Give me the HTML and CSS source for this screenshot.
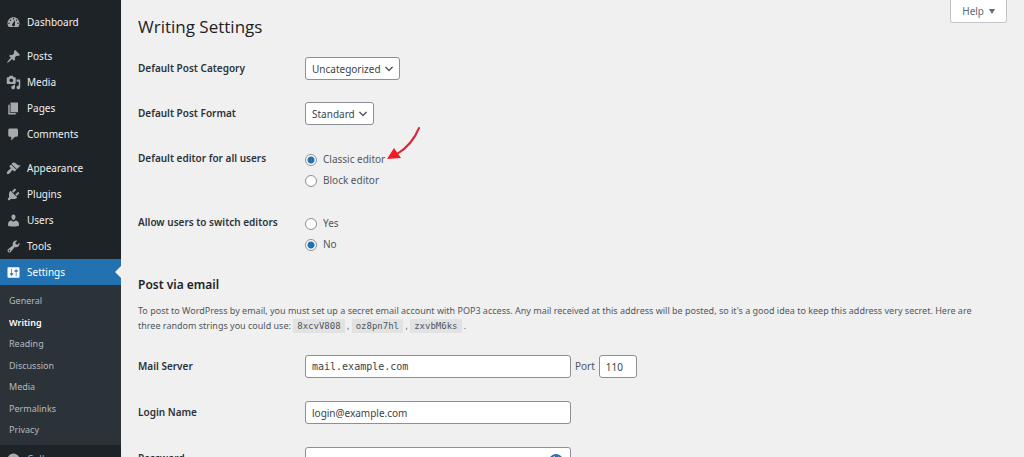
FILE: index.html
```html
<!DOCTYPE html>
<html lang="en">
<head>
  <meta charset="UTF-8" />
  <meta name="viewport" content="width=device-width, initial-scale=1.0"/>
  <title>Writing Settings</title>
  <link rel="stylesheet" href="styles.css">
</head>
<body>
  <div class="layout">
    <nav class="sidebar">
      <ul class="menu">
        <li><a href="#"><svg viewBox="0 0 20 20"><path fill-rule="evenodd" d="M3.76 16h12.48c1.1-1.37 1.76-3.11 1.76-5 0-4.42-3.58-8-8-8s-8 3.58-8 8c0 1.89.66 3.63 1.76 5zM10 4c.55 0 1 .45 1 1s-.45 1-1 1-1-.45-1-1 .45-1 1-1zM6 6c.55 0 1 .45 1 1s-.45 1-1 1-1-.45-1-1 .45-1 1-1zm8 0c.55 0 1 .45 1 1s-.45 1-1 1-1-.45-1-1 .45-1 1-1zm-5.37 5.55L12 7v6c0 1.1-.9 2-2 2s-2-.9-2-2c0-.57.24-1.08.63-1.45zM4 10c.55 0 1 .45 1 1s-.45 1-1 1-1-.45-1-1 .45-1 1-1zm12 0c.55 0 1 .45 1 1s-.45 1-1 1-1-.45-1-1 .45-1 1-1z"/></svg>Dashboard</a></li>
      </ul>
      <ul class="menu">
        <li><a href="#"><svg viewBox="0 0 20 20"><path d="M10.44 3.02l1.82-1.82 6.36 6.35-1.83 1.82c-1.05-.68-2.48-.57-3.41.36l-.75.75c-.92.93-1.04 2.35-.35 3.41l-1.83 1.82-2.41-2.41-2.8 2.79c-.42.42-3.38 2.71-3.8 2.29s1.86-3.39 2.28-3.81l2.79-2.79L4.1 9.36l1.83-1.82c1.05.69 2.48.57 3.4-.36l.75-.75c.93-.92 1.05-2.35.36-3.41z"/></svg>Posts</a></li>
        <li><a href="#"><svg viewBox="0 0 20 20"><path fill-rule="evenodd" d="M13 11V4c0-.55-.45-1-1-1h-1.67L9 1H5L3.67 3H2c-.55 0-1 .45-1 1v7c0 .55.45 1 1 1h10c.55 0 1-.45 1-1zM7 4.5c1.38 0 2.5 1.12 2.5 2.5S8.38 9.5 7 9.5 4.5 8.38 4.5 7 5.62 4.5 7 4.5zM14 6h5v10.5c0 1.38-1.12 2.5-2.5 2.5S14 17.88 14 16.5s1.12-2.5 2.5-2.5c.17 0 .34.02.5.05V9h-3V6zm-4 8.05V13h2v3.5c0 1.38-1.12 2.5-2.5 2.5S7 17.88 7 16.5 8.12 14 9.5 14c.17 0 .34.02.5.05z"/></svg>Media</a></li>
        <li><a href="#"><svg viewBox="0 0 20 20"><path d="M6 15V2h10v13H6zm-1 1h8v2H3V5h2v11z"/></svg>Pages</a></li>
        <li><a href="#"><svg viewBox="0 0 20 20"><path d="M5 2h9c1.1 0 2 .9 2 2v7c0 1.1-.9 2-2 2h-2l-5 5v-5H5c-1.1 0-2-.9-2-2V4c0-1.1.9-2 2-2z"/></svg>Comments</a></li>
      </ul>
      <ul class="menu">
        <li><a href="#"><svg viewBox="0 0 20 20"><path d="M14.48 11.06L7.41 3.99l1.5-1.5c.5-.56 2.3-.47 3.51.32 1.21.8 1.43 1.28 2.91 2.1 1.18.64 2.45 1.26 4.45.85zm-.71.71L6.7 4.7 4.93 6.47c-.39.39-.39 1.02 0 1.41l1.06 1.06c.39.39.39 1.03 0 1.42-.6.6-1.43 1.11-2.21 1.69-.35.26-.7.53-1.01.84C1.43 14.23.4 16.08 1.4 17.07c.99 1 2.84-.03 4.18-1.36.31-.31.58-.66.85-1.02.57-.78 1.08-1.61 1.69-2.21.39-.39 1.02-.39 1.41 0l1.06 1.06c.39.39 1.02.39 1.41 0z"/></svg>Appearance</a></li>
        <li><a href="#"><svg viewBox="0 0 20 20"><path d="M13.11 4.36L9.87 7.6 8 5.73l3.24-3.24c.35-.34 1.05-.2 1.56.32.52.51.66 1.21.31 1.55zm-8 1.77l.91-1.12 9.01 9.01-1.19.84c-.71.71-2.63 1.16-3.82 1.16H6.14L4.9 17.26c-.59.59-1.54.59-2.12 0-.59-.58-.59-1.53 0-2.12l1.24-1.24v-3.88c0-1.13.4-3.19 1.09-3.89zm7.26 3.97l3.24-3.24c.34-.35 1.04-.21 1.55.31.52.51.66 1.21.31 1.55l-3.24 3.25z"/></svg>Plugins</a></li>
        <li><a href="#"><svg viewBox="0 0 20 20"><path d="M10 9.25c-2.27 0-2.73-3.44-2.73-3.44C7 4.02 7.82 2 9.97 2c2.16 0 2.98 2.02 2.71 3.81 0 0-.41 3.44-2.68 3.44zm0 2.57L12.72 10c2.39 0 4.52 2.33 4.52 4.53v2.49s-3.65 1.13-7.24 1.13c-3.65 0-7.24-1.13-7.24-1.13v-2.49c0-2.25 1.94-4.48 4.47-4.48z"/></svg>Users</a></li>
        <li><a href="#"><svg viewBox="0 0 20 20"><path fill-rule="evenodd" d="M16.68 9.77c-1.34 1.34-3.3 1.67-4.95.99l-5.41 6.52c-.99.99-2.59.99-3.58 0s-.99-2.59 0-3.57l6.52-5.42c-.68-1.65-.35-3.61.99-4.95 1.28-1.28 3.12-1.62 4.72-1.06l-2.89 2.89 2.82 2.82 2.86-2.87c.53 1.58.18 3.39-1.08 4.65zM3.81 16.21c.4.39 1.04.39 1.43 0 .4-.4.4-1.04 0-1.43-.39-.4-1.03-.4-1.43 0-.39.39-.39 1.03 0 1.43z"/></svg>Tools</a></li>
        <li><a href="#" class="current"><svg viewBox="0 0 20 20"><path fill-rule="evenodd" d="M18 16V4c0-.55-.45-1-1-1H3c-.55 0-1 .45-1 1v12c0 .55.45 1 1 1h14c.55 0 1-.45 1-1zM8 11h1c.55 0 1 .45 1 1s-.45 1-1 1H8v1.5c0 .28-.22.5-.5.5s-.5-.22-.5-.5V13H6c-.55 0-1-.45-1-1s.45-1 1-1h1V5.5c0-.28.22-.5.5-.5s.5.22.5.5V11zm5-2h-1c-.55 0-1-.45-1-1s.45-1 1-1h1V5.5c0-.28.22-.5.5-.5s.5.22.5.5V7h1c.55 0 1 .45 1 1s-.45 1-1 1h-1v5.5c0 .28-.22.5-.5.5s-.5-.22-.5-.5V9z"/></svg>Settings</a>
          <ul class="submenu">
            <li><a href="#">General</a></li>
            <li><a href="#" class="active">Writing</a></li>
            <li><a href="#">Reading</a></li>
            <li><a href="#">Discussion</a></li>
            <li><a href="#">Media</a></li>
            <li><a href="#">Permalinks</a></li>
            <li><a href="#">Privacy</a></li>
          </ul>
        </li>
      </ul>
      <button type="button" class="collapse"><svg viewBox="0 0 20 20"><path fill-rule="evenodd" d="M10 2a8 8 0 1 0 0 16 8 8 0 0 0 0-16zm2 4v8l-5-4z"/></svg>Collapse menu</button>
    </nav>

    <main class="content">
      <div class="topbar">
        <h1>Writing Settings</h1>
        <button type="button" class="help">Help <span class="caret"></span></button>
      </div>

      <form>
        <div class="row">
          <label class="name" for="category">Default Post Category</label>
          <div class="field">
            <select id="category"><option>Uncategorized</option></select>
          </div>
        </div>
        <div class="row">
          <label class="name" for="format">Default Post Format</label>
          <div class="field">
            <select id="format"><option>Standard</option></select>
          </div>
        </div>
        <div class="row radios" role="radiogroup" aria-labelledby="editorName">
          <span class="name" id="editorName">Default editor for all users</span>
          <div class="field options">
            <label class="pointed"><input type="radio" name="editor" checked>Classic editor
              <svg class="arrow" viewBox="0 0 36 36"><path d="M34 3Q27 20 12 29" fill="none" stroke="#dc2434" stroke-width="2" stroke-linecap="round"/><path d="M2 34l7-11 7 10z" fill="#ee1c24"/></svg>
            </label>
            <label><input type="radio" name="editor">Block editor</label>
          </div>
        </div>
        <div class="row radios" role="radiogroup" aria-labelledby="switchName">
          <span class="name" id="switchName">Allow users to switch editors</span>
          <div class="field options">
            <label><input type="radio" name="switch">Yes</label>
            <label><input type="radio" name="switch" checked>No</label>
          </div>
        </div>

        <h2>Post via email</h2>
        <p>To post to WordPress by email, you must set up a secret email account with POP3 access. Any mail received at this address will be posted, so it's a good idea to keep this address very secret. Here are three random strings you could use: <code>8xcvV808</code> , <code>oz8pn7hl</code> , <code>zxvbM6ks</code> .</p>

        <div class="row mail">
          <label class="name" for="server">Mail Server</label>
          <div class="field">
            <input type="text" id="server" class="text mono" value="mail.example.com">
            <label for="port">Port</label>
            <input type="text" id="port" class="text port" value="110">
          </div>
        </div>
        <div class="row mail">
          <label class="name" for="login">Login Name</label>
          <div class="field">
            <input type="text" id="login" class="text" value="login@example.com">
          </div>
        </div>
        <div class="row mail">
          <label class="name" for="password">Password</label>
          <div class="field password">
            <input type="password" id="password" class="text">
            <svg class="key" viewBox="0 0 14 14"><circle cx="7" cy="7" r="6" fill="#dbe7f3" stroke="#2f6fb5" stroke-width="2"/><path d="M6 2h3v10H6z" fill="#2f6fb5"/></svg>
          </div>
        </div>
      </form>
    </main>
  </div>
</body>
</html>
```

FILE: styles.css
```css
:root {
  --dark: #1d2327;
  --submenu: #2c3338;
  --blue: #2271b1;
  --bg: #f0f0f0;
  --text: #50575e;
  --border: #8c8f94;
}

* {
  margin: 0;
  padding: 0;
  box-sizing: border-box;
}

body,
button,
input,
select {
  font-family: "Noto Sans", sans-serif;
  font-size: 10px;
  color: var(--text);
}

body {
  background: var(--bg);
  line-height: 15px;
}

.layout {
  display: flex;
  height: 100vh;
  overflow: hidden;
}

/* sidebar */
.sidebar {
  flex: 0 0 121px;
  background: var(--dark);
  padding-top: 9px;
}

.sidebar ul {
  list-style: none;
}

.menu {
  margin-bottom: 8px;
}

.menu a {
  display: flex;
  align-items: center;
  gap: 6px;
  height: 26px;
  padding-left: 6px;
  color: #f0f0f1;
  text-decoration: none;
}

.sidebar svg {
  width: 15px;
  height: 15px;
  fill: #a7aaad;
}

.menu .current {
  position: relative;
  background: var(--blue);
  color: #fff;
}

.menu .current svg {
  fill: #fff;
}

.menu .current::after {
  content: "";
  position: absolute;
  right: 0;
  top: 7px;
  border: 6px solid transparent;
  border-left: 0;
  border-right-color: var(--bg);
}

.submenu {
  display: flex;
  flex-direction: column;
  justify-content: space-between;
  min-height: 160px;
  padding: 5px 0;
  background: var(--submenu);
}

.menu:last-of-type {
  margin-bottom: 0;
}

.menu .submenu a {
  height: 21px;
  padding-left: 9px;
  font-size: 9px;
  color: #b4b9be;
}

.menu .submenu .active {
  color: #fff;
  font-weight: 600;
}

.collapse {
  display: flex;
  align-items: center;
  gap: 6px;
  height: 28px;
  padding-left: 6px;
  background: none;
  border: none;
  color: #a7aaad;
}

/* content */
.content {
  flex: 1;
  padding: 0 17px;
}

.topbar {
  display: flex;
  justify-content: space-between;
  align-items: flex-start;
  margin-bottom: 19px;
}

h1 {
  margin-top: 15px;
  font-family: "Open Sans", "Noto Sans", sans-serif;
  font-size: 17px;
  font-weight: 400;
  line-height: 23px;
  color: var(--dark);
}

.help {
  display: flex;
  align-items: center;
  gap: 5px;
  height: 23px;
  padding: 0 11px;
  background: #fff;
  border: 1px solid #c3c4c7;
  border-top: none;
  border-radius: 0 0 3px 3px;
  color: #646970;
}

.caret {
  border: 3px solid transparent;
  border-top: 5px solid #646970;
  border-bottom: none;
}

.row {
  display: flex;
  align-items: flex-start;
  margin-bottom: 22px;
}

.name {
  flex: 0 0 167px;
  padding-top: 4px;
  font-weight: 600;
  color: #2c3338;
}

.field {
  display: flex;
  align-items: center;
  gap: 4px;
}

select,
.text {
  height: 23px;
  padding: 0 6px;
  background: #fff;
  border: 1px solid var(--border);
  border-radius: 3px;
  color: #3c434a;
}

select {
  appearance: none;
  padding-right: 18px;
  background: #fff url("data:image/svg+xml,%3Csvg xmlns='http://www.w3.org/2000/svg' viewBox='0 0 20 20'%3E%3Cpath d='M5 6l5 5 5-5 2 1-7 7-7-7z' fill='%23555'/%3E%3C/svg%3E") no-repeat right 4px center / 12px 12px;
}

.text {
  width: 266px;
}

.mono {
  font-family: "DejaVu Sans Mono", monospace;
}

.port {
  width: 38px;
}

.radios,
.mail {
  margin-bottom: 23px;
}

.options {
  flex-direction: column;
  align-items: flex-start;
  gap: 6px;
  padding-top: 5px;
}

.options label {
  display: flex;
  align-items: center;
  gap: 6px;
}

.options input {
  appearance: none;
  width: 12px;
  height: 12px;
  background: #fff;
  border: 1px solid var(--border);
  border-radius: 50%;
}

.options input:checked {
  background: radial-gradient(circle, var(--blue) 3px, #fff 4px);
}

.pointed {
  position: relative;
}

.arrow {
  position: absolute;
  left: 100%;
  bottom: 6px;
  width: 36px;
  height: 36px;
}

h2 {
  font-size: 12px;
  font-weight: 600;
  line-height: 20px;
  color: var(--dark);
  margin-bottom: 8px;
}

p {
  margin-bottom: 21px;
  padding-right: 24px;
  font-size: 9px;
}

code {
  padding: 2px 4px;
  background: #e2e2e3;
  font-family: "DejaVu Sans Mono", monospace;
  font-size: 9px;
}

.password {
  position: relative;
}

.key {
  position: absolute;
  right: 8px;
  top: 7px;
  width: 14px;
  height: 14px;
}
```
